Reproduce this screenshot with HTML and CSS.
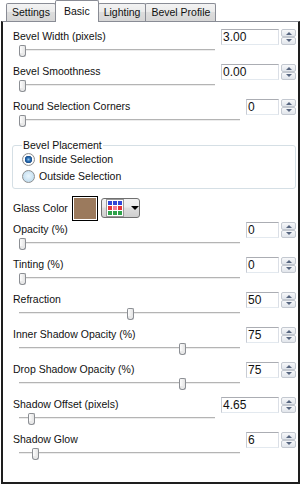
FILE: index.html
```html
<!DOCTYPE html>
<html lang="en">

<head>
    <meta charset="UTF-8">
    <title>Basic</title>
    <link rel="stylesheet" href="styles.css">
</head>

<body>
    <div class="tabs">
        <div class="tab">Settings</div>
        <div class="tab active">Basic</div>
        <div class="tab">Lighting</div>
        <div class="tab">Bevel Profile</div>
    </div>

    <div class="panel">
        <div class="row">
            <div class="ctl">
                <div class="label">Bevel Width (pixels)</div>
                <div class="slider"><span class="thumb" style="left: 0px"></span></div>
            </div>
            <div class="num"><span class="box wide">3.00</span><span class="spin"><i class="up"></i><i class="down"></i></span></div>
        </div>

        <div class="row">
            <div class="ctl">
                <div class="label">Bevel Smoothness</div>
                <div class="slider"><span class="thumb" style="left: 0px"></span></div>
            </div>
            <div class="num"><span class="box wide">0.00</span><span class="spin"><i class="up"></i><i class="down"></i></span></div>
        </div>

        <div class="row">
            <div class="ctl">
                <div class="label">Round Selection Corners</div>
                <div class="slider"><span class="thumb" style="left: 0px"></span></div>
            </div>
            <div class="num"><span class="box">0</span><span class="spin"><i class="up"></i><i class="down"></i></span></div>
        </div>

        <fieldset class="group">
            <legend>Bevel Placement</legend>
            <div class="radio"><span class="dot checked"></span>Inside Selection</div>
            <div class="radio"><span class="dot"></span>Outside Selection</div>
        </fieldset>

        <div class="color-row">
            <div class="label">Glass Color</div>
            <div class="swatch"></div>
            <div class="color-btn">
                <span class="palette">
                    <i class="b"></i><i class="b"></i><i class="b"></i>
                    <i class="r"></i><i class="p"></i><i class="r"></i>
                    <i class="g"></i><i class="g"></i><i class="g"></i>
                </span>
                <span class="caret"></span>
            </div>
        </div>

        <div class="row">
            <div class="ctl">
                <div class="label">Opacity (%)</div>
                <div class="slider"><span class="thumb" style="left: 0px"></span></div>
            </div>
            <div class="num"><span class="box">0</span><span class="spin"><i class="up"></i><i class="down"></i></span></div>
        </div>

        <div class="row">
            <div class="ctl">
                <div class="label">Tinting (%)</div>
                <div class="slider"><span class="thumb" style="left: 0px"></span></div>
            </div>
            <div class="num"><span class="box">0</span><span class="spin"><i class="up"></i><i class="down"></i></span></div>
        </div>

        <div class="row">
            <div class="ctl">
                <div class="label">Refraction</div>
                <div class="slider"><span class="thumb" style="left: 108px"></span></div>
            </div>
            <div class="num"><span class="box">50</span><span class="spin"><i class="up"></i><i class="down"></i></span></div>
        </div>

        <div class="row">
            <div class="ctl">
                <div class="label">Inner Shadow Opacity (%)</div>
                <div class="slider"><span class="thumb" style="left: 160px"></span></div>
            </div>
            <div class="num"><span class="box">75</span><span class="spin"><i class="up"></i><i class="down"></i></span></div>
        </div>

        <div class="row">
            <div class="ctl">
                <div class="label">Drop Shadow Opacity (%)</div>
                <div class="slider"><span class="thumb" style="left: 160px"></span></div>
            </div>
            <div class="num"><span class="box">75</span><span class="spin"><i class="up"></i><i class="down"></i></span></div>
        </div>

        <div class="row">
            <div class="ctl">
                <div class="label">Shadow Offset (pixels)</div>
                <div class="slider"><span class="thumb" style="left: 9px"></span></div>
            </div>
            <div class="num"><span class="box wide">4.65</span><span class="spin"><i class="up"></i><i class="down"></i></span></div>
        </div>

        <div class="row">
            <div class="ctl">
                <div class="label">Shadow Glow</div>
                <div class="slider"><span class="thumb" style="left: 13px"></span></div>
            </div>
            <div class="num"><span class="box">6</span><span class="spin"><i class="up"></i><i class="down"></i></span></div>
        </div>
    </div>
</body>

</html>
```

FILE: styles.css
```css
html,
body {
    margin: 0;
    padding: 0;
    background-color: #fff;
}

body {
    width: 301px;
    height: 485px;
    font-family: "Liberation Sans", Arial, sans-serif;
    font-size: 10.5px;
    color: #111;
    overflow: hidden;
}

/* tab strip */
.tabs {
    display: flex;
    align-items: flex-end;
    height: 21px;
    padding-left: 7px;
}

.tab {
    height: 18px;
    line-height: 17px;
    padding: 0 5px;
    border: 1px solid #898c95;
    border-bottom: none;
    border-radius: 2px 2px 0 0;
    background: linear-gradient(#f3f3f3, #ebebeb 45%, #dddddd 50%, #d6d6d6);
    box-sizing: border-box;
    margin-left: -1px;
}

.tab.active {
    position: relative;
    z-index: 1;
    height: 22px;
    margin-bottom: -1px;
    padding: 2px 8px 0;
    line-height: 16px;
    background: #fff;
}

/* page */
.panel {
    margin-left: 1px;
    width: 299px;
    height: 463px;
    box-sizing: border-box;
    border-top: 1px solid #898c95;
    border-left: 2px solid #1e1e1e;
    border-right: 2px solid #1e1e1e;
    border-bottom: 2px solid #1e1e1e;
    padding: 7px 2px 0 10px;
}

.label {
    height: 14px;
    line-height: 14px;
    white-space: nowrap;
}

.row {
    display: flex;
    height: 35px;
}

.ctl {
    flex: 1;
    margin-right: 6px;
}

.slider {
    position: relative;
    height: 14px;
    margin-left: 6px;
}

.slider::before {
    content: "";
    position: absolute;
    left: 0;
    right: 0;
    top: 6px;
    height: 1px;
    background-color: #b4b4b4;
    border-bottom: 1px solid #ececec;
}

.thumb {
    position: absolute;
    top: 2px;
    width: 5px;
    height: 7px;
    border: 1px solid #8c8f94;
    border-bottom: none;
    border-radius: 2px 2px 0 0;
    background: linear-gradient(to right, #fdfdfd, #e4e4e4);
}

.thumb::after {
    content: "";
    position: absolute;
    left: -1px;
    top: 7px;
    width: 5px;
    height: 3px;
    border: 1px solid #8c8f94;
    border-top: none;
    border-radius: 0 0 3px 3px;
    background: #e9e9e9;
}

.num {
    display: flex;
    height: 16px;
}

.box {
    width: 33px;
    height: 16px;
    box-sizing: border-box;
    border: 1px solid #abadb3;
    border-color: #abadb3 #dbdfe6 #e3e9ef #c8ccd4;
    padding-left: 1px;
    font-size: 12px;
    line-height: 14px;
    background: #fff;
}

.box.wide {
    width: 58px;
}

.spin {
    display: flex;
    flex-direction: column;
    width: 15px;
    height: 16px;
    margin-left: 2px;
}

.spin i {
    position: relative;
    flex: 1;
    border: 1px solid #c3c8d0;
    border-radius: 2px;
    background: linear-gradient(#f7f8fa, #e1e5eb);
}

.spin i::after {
    content: "";
    position: absolute;
    left: 4px;
    top: 2px;
    border-left: 3px solid transparent;
    border-right: 3px solid transparent;
}

.spin .up::after {
    border-bottom: 3px solid #56657f;
}

.spin .down::after {
    border-top: 3px solid #56657f;
    top: 1px;
}

/* group box */
.group {
    margin: 4px 0 0 -1px;
    padding: 0 0 5px 9px;
    border: 1px solid #d5dfe5;
    border-radius: 3px;
}

.group legend {
    padding: 0 1px;
    line-height: 14px;
    height: 14px;
}

.radio {
    display: flex;
    align-items: center;
    height: 14px;
    margin-bottom: 3px;
    white-space: nowrap;
}

.radio:last-child {
    margin-bottom: 0;
}

.dot {
    width: 11px;
    height: 11px;
    margin-right: 4px;
    border: 1px solid #8e8f8f;
    border-radius: 50%;
    background: radial-gradient(circle at 50% 45%, #eaf6fd, #c5dff0 70%, #b1cfe6);
}

.dot.checked {
    background: radial-gradient(circle, #8fc3ea 0, #2a6cb0 2px, #1b4f8c 3.5px, #fff 4px, #f3f3f3 5.5px);
}

/* glass color */
.color-row {
    display: flex;
    align-items: center;
    height: 24px;
    margin: 7px 0 2px;
}

.color-row .label {
    width: 59px;
}

.swatch {
    width: 24px;
    height: 23px;
    border: 1px solid #000;
    box-shadow: inset 0 0 0 1px #fff;
    background-color: #9b7a5d;
}

.color-btn {
    display: flex;
    align-items: center;
    width: 39px;
    height: 20px;
    margin-left: 3px;
    box-sizing: border-box;
    border: 1px solid #707070;
    border-radius: 3px;
    background: linear-gradient(#f2f2f2, #ebebeb 45%, #dddddd 50%, #cfcfcf);
    padding-left: 4px;
}

.palette {
    display: grid;
    grid-template-columns: repeat(3, 4px);
    grid-template-rows: repeat(3, 4px);
    gap: 1px;
    padding: 1px;
    background-color: #fff;
    border: 1px solid #9a9a9a;
}

.palette .b {
    background-color: #3046d8;
}

.palette .r {
    background-color: #e2333a;
}

.palette .p {
    background-color: #ee7d9a;
}

.palette .g {
    background-color: #2ea24a;
}

.caret {
    margin-left: 7px;
    border-left: 4px solid transparent;
    border-right: 4px solid transparent;
    border-top: 4px solid #000;
}
```
